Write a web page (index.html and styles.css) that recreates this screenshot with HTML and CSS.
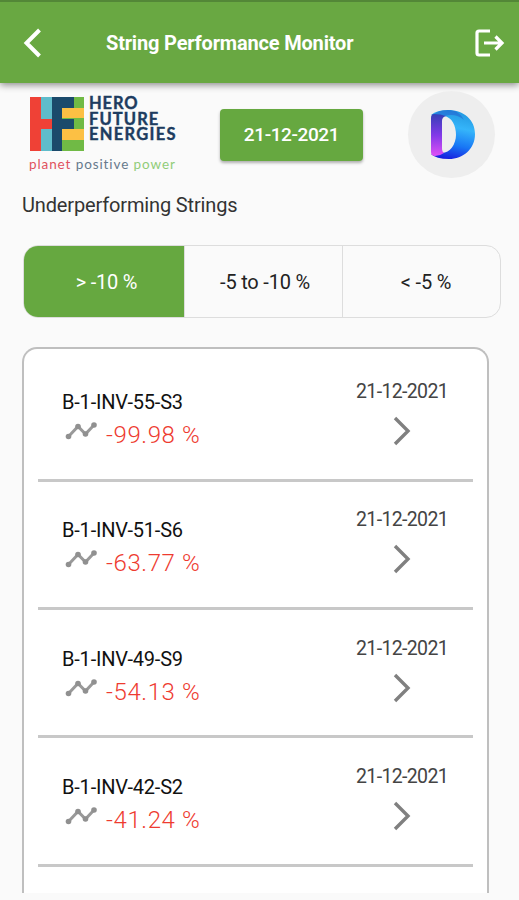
FILE: index.html
```html
<!DOCTYPE html>
<html lang="en">
<head>
    <meta charset="UTF-8">
    <meta name="viewport" content="width=device-width, initial-scale=1.0">
    <title>String Performance Monitor</title>
    <link rel="stylesheet" href="styles.css">
</head>
<body>
    <header class="topbar">
        <svg class="back" width="20" height="32" viewBox="0 0 20 32" aria-label="Back"><path d="M17.500 3 4.500 16l13 13"/></svg>
        <h1>String Performance Monitor</h1>
        <svg class="logout" width="32" height="30" viewBox="0 0 32 30" aria-label="Log out"><path d="M16 3H5Q3 3 3 5v20q0 2 2 2h11M10 15h18M21.500 8.500 28 15l-6.500 6.500"/></svg>
    </header>

    <section class="brand-row">
        <div class="brand">
            <div class="brand-main">
                <svg width="54" height="54" viewBox="0 0 54 54">
                    <path fill="#5fbccb" d="M10 0h12v54H10z"/>
                    <path fill="#ef4136" d="M0 0h11v22h11v10H11v22H0z"/>
                    <path fill="#70ba45" d="M32 0h22v54H32z"/>
                    <path fill="#fcc044" d="M32 11h22v10H32zM32 32h22v11H32z"/>
                    <path fill="#1b4a6b" d="M22 0h22v11H32v11h12v10H32v22H22z"/>
                </svg>
                <div class="brand-name">
                    <span class="hero">HERO</span>
                    <span class="future">FUTURE</span>
                    <span class="energies">ENERGIES</span>
                </div>
            </div>
            <div class="tagline"><span class="planet">planet</span> <span class="positive">positive</span> <span class="power">power</span></div>
        </div>
        <button class="date-btn">21-12-2021</button>
        <div class="avatar">
            <svg width="46" height="51" viewBox="0 0 46 51">
                <defs>
                    <linearGradient id="stem" x1="0" y1="0" x2="0" y2="1">
                        <stop offset="0" stop-color="#3540b5"/>
                        <stop offset=".5" stop-color="#8139e8"/>
                        <stop offset="1" stop-color="#df50f5"/>
                    </linearGradient>
                    <linearGradient id="bowl" x1=".6" y1="0" x2=".4" y2="1">
                        <stop offset="0" stop-color="#2297df"/>
                        <stop offset=".35" stop-color="#35b5fa"/>
                        <stop offset=".7" stop-color="#1877f5"/>
                        <stop offset="1" stop-color="#1820df"/>
                    </linearGradient>
                </defs>
                <path fill="url(#bowl)" d="M1 6Q7 1 18 1c16 0 27 10 27 24 0 15-12 25-26 25Q6 50 1 45l11-1c8 0 14-9 14-18S22 8 14 7z"/>
                <path fill="url(#stem)" d="M4 5q-3 0-3 4v34q0 4 4 4 5 0 9-3-2-1-2-5V12q0-4 4-5-5-2-12-2z"/>
                <path fill="#2449c7" d="M3 6Q9 1 18 1l7 1q6 3 9 9-8-7-19-4Q8 5 3 6z" opacity=".4"/>
            </svg>
        </div>
    </section>

    <h2>Underperforming Strings</h2>

    <div class="tabs">
        <button class="tab active">&gt; -10 %</button>
        <button class="tab">-5 to -10 %</button>
        <button class="tab last">&lt; -5 %</button>
    </div>

    <main class="list" id="list"></main>

    <script>
        const strings = [
            { name: 'B-1-INV-55-S3', value: '-99.98 %' },
            { name: 'B-1-INV-51-S6', value: '-63.77 %' },
            { name: 'B-1-INV-49-S9', value: '-54.13 %' },
            { name: 'B-1-INV-42-S2', value: '-41.24 %' }
        ];

        document.getElementById('list').innerHTML = strings.map(s => `
            <article class="item">
                <div class="info">
                    <div class="name">${s.name}</div>
                    <div class="reading">
                        <svg width="32" height="18" viewBox="0 0 32 18">
                            <path d="M3.500 14.500 13 4.500l7.500 7.500L29 3" fill="none" stroke="#999" stroke-width="3"/>
                            <g fill="#909090"><circle cx="3.500" cy="14.500" r="2.800"/><circle cx="13" cy="4.500" r="2.800"/><circle cx="20.500" cy="12" r="2.800"/><circle cx="29" cy="3" r="2.800"/></g>
                        </svg>
                        <span class="value">${s.value}</span>
                    </div>
                </div>
                <div class="side">
                    <div class="date">21-12-2021</div>
                    <svg width="18" height="30" viewBox="0 0 18 30"><path d="m2 2 13 13L2 28" fill="none" stroke="#808080" stroke-width="3.400"/></svg>
                </div>
            </article>`).join('');
    </script>
</body>
</html>
```

FILE: styles.css
```css
* {
    box-sizing: border-box;
}

body {
    font-family: Roboto, sans-serif;
    margin: 0;
    height: 900px;
    overflow: hidden;
    background-color: #fafafa;
    color: #222;
}

svg {
    display: block;
    flex-shrink: 0;
}

.topbar {
    display: flex;
    align-items: center;
    height: 83px;
    padding: 1px 13px 0 22px;
    background-color: #69a842;
    border-top: 2px solid #538737;
    box-shadow: 0 2px 7px rgba(0, 0, 0, 0.45);
}

.topbar svg {
    fill: none;
    stroke: white;
    stroke-width: 4;
}

.topbar .logout {
    stroke-width: 3.2;
    margin-left: auto;
}

h1 {
    margin: 0 0 0 64px;
    font-size: 20px;
    font-weight: 700;
    letter-spacing: -0.18px;
    color: white;
    white-space: nowrap;
}

.brand-row {
    display: flex;
    height: 104px;
    padding-left: 29px;
}

.brand {
    width: 191px;
    padding-top: 14px;
}

.brand-main {
    display: flex;
    gap: 5px;
    height: 54px;
    padding-left: 1px;
}

.brand-name {
    display: flex;
    flex-direction: column;
    margin-top: -1px;
    font-family: Lato, sans-serif;
    font-size: 16.5px;
    font-weight: 700;
    line-height: 15.5px;
    color: #1d3c60;
    -webkit-text-stroke: 0.4px #1d3c60;
}

.hero {
    letter-spacing: 0.9px;
}

.future {
    letter-spacing: 1.1px;
}

.energies {
    letter-spacing: 1.3px;
}

.tagline {
    margin-top: 5px;
    font-family: Lato, sans-serif;
    font-size: 13.5px;
    line-height: 16px;
    letter-spacing: 0.9px;
    white-space: nowrap;
}

.planet {
    color: #e0525e;
}

.positive {
    color: #66798c;
}

.power {
    color: #91cc78;
}

button {
    border: none;
    font-family: inherit;
}

.date-btn {
    width: 143px;
    height: 52px;
    margin-top: 26px;
    padding: 0 0 2px;
    border-radius: 4px;
    background-color: #66a840;
    box-shadow: 0 2px 3px rgba(0, 0, 0, 0.3);
    color: white;
    font-size: 19px;
    font-weight: 500;
    letter-spacing: -0.4px;
}

.avatar {
    display: flex;
    align-items: center;
    justify-content: center;
    width: 87px;
    height: 87px;
    margin: 8px 0 0 45px;
    padding-left: 2px;
    border-radius: 50%;
    background-color: #eee;
}

h2 {
    margin: 6px 0 0 22px;
    font-size: 20px;
    font-weight: 400;
    line-height: 24px;
    letter-spacing: -0.15px;
    color: #333;
}

.tabs {
    display: flex;
    width: 478px;
    height: 73px;
    margin: 28px 0 0 23px;
    border: 1px solid #ddd;
    border-radius: 15px;
    overflow: hidden;
}

.tab {
    flex: 0 0 158px;
    padding: 0 0 0 3px;
    background: none;
    border-left: 1px solid #ddd;
    font-size: 20px;
    letter-spacing: -0.2px;
    color: #222;
}

.tab.active {
    flex-basis: 160px;
    padding-left: 5px;
    border-left: none;
    background-color: #66a840;
    color: white;
}

.tab.last {
    padding-left: 9px;
}

.list {
    width: 467px;
    height: 546px;
    margin: 29px 0 0 22px;
    padding: 0 14px;
    overflow: hidden;
    border: 2px solid #bfbfbf;
    border-bottom: none;
    border-radius: 15px 15px 0 0;
    background-color: white;
}

.item {
    display: flex;
    justify-content: space-between;
    height: 128.4px;
    padding: 0 25px 0 24px;
    border-bottom: 3px solid #c8c8c8;
}

.item:first-child {
    height: 132.6px;
    padding-top: 4px;
}

.name {
    margin-top: 35.6px;
    font-size: 20px;
    line-height: 26px;
    letter-spacing: -0.2px;
    color: #111;
}

.reading {
    display: flex;
    gap: 9px;
    padding-left: 3px;
}

.reading svg {
    margin-top: 7px;
}

.value {
    margin-top: 4px;
    font-size: 24px;
    font-weight: 300;
    line-height: 32px;
    letter-spacing: 0.6px;
    color: #ee3b30;
}

.date {
    margin-top: 26.6px;
    font-size: 19.5px;
    line-height: 24px;
    letter-spacing: -0.65px;
    color: #444;
}

.side svg {
    margin: 12px 0 0 37px;
}
```
